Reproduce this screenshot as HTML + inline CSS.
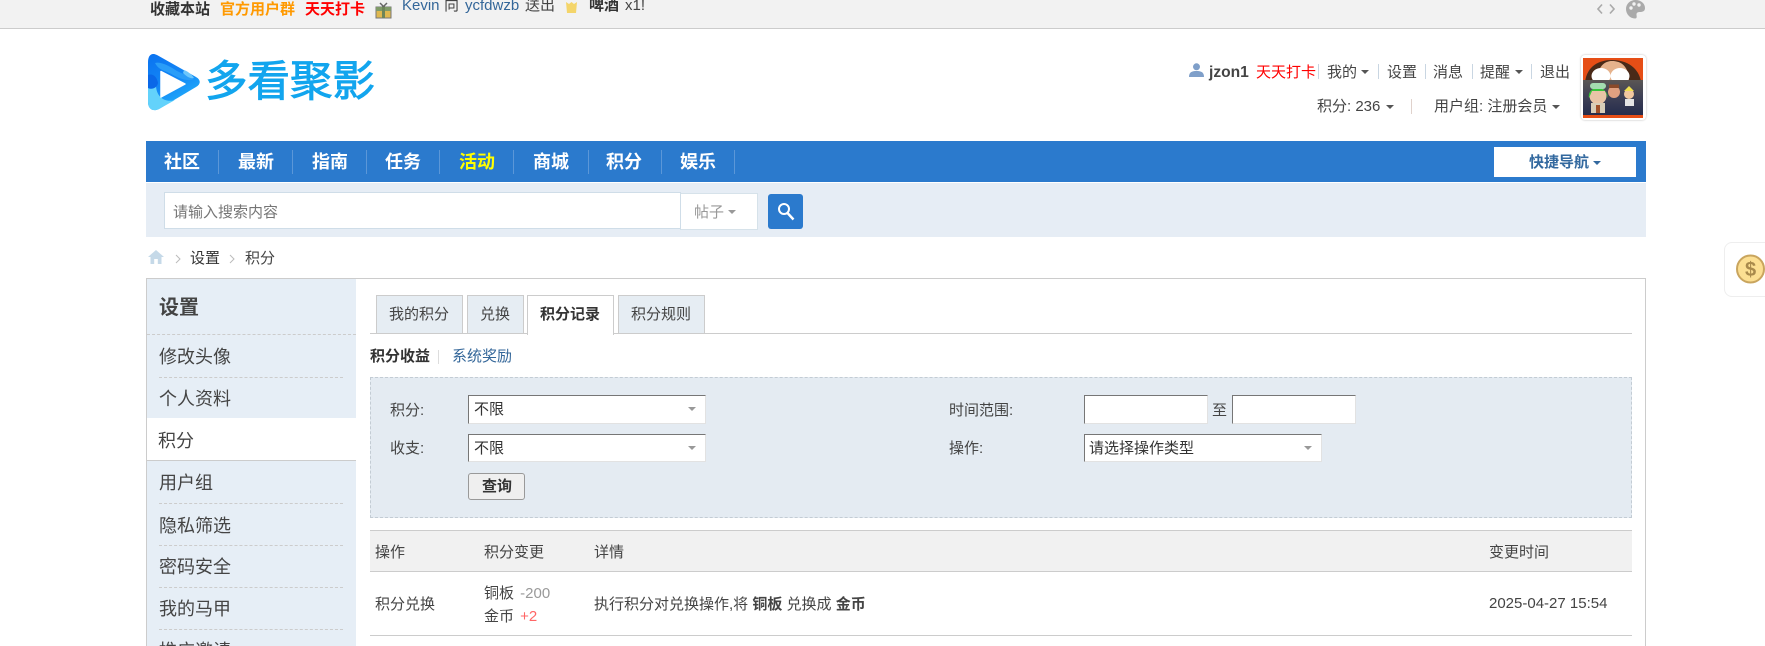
<!DOCTYPE html>
<html lang="zh-CN">
<head>
<meta charset="utf-8">
<title>积分记录</title>
<style>
html,body{margin:0;padding:0;background:#fff;width:1765px;height:646px;overflow:hidden;}
#w{position:relative;width:1765px;height:646px;overflow:hidden;font-family:"Liberation Sans","Noto Sans CJK SC",sans-serif;font-size:15px;color:#444;}
.a{position:absolute;box-sizing:border-box;}
.t{position:absolute;white-space:nowrap;line-height:20px;height:20px;}
.b{font-weight:bold;}
.nav{color:#fff;font-size:18px;font-weight:bold;line-height:24px;height:24px;top:150px;}
.ns{position:absolute;top:150px;height:24px;width:1px;background:#5b97d8;}
.sep{position:absolute;width:1px;background:#c9d6e2;}
.car{position:absolute;width:0;height:0;border-left:4px solid transparent;border-right:4px solid transparent;border-top:4px solid #555;}
.side{font-size:18px;line-height:24px;height:24px;left:159px;}
.dash{position:absolute;left:159px;width:184px;border-top:1px dashed #ccc;height:0;}
.tab{position:absolute;box-sizing:border-box;top:295px;height:39px;border:1px solid #ccc;background:#e6edf3;}
.sel{position:absolute;box-sizing:border-box;background:#fff;border:1px solid #e2e2e2;border-top-color:#767676;border-left-color:#767676;}
</style>
</head>
<body>
<div id="w">
<!-- top bar -->
<div class="a" style="left:0;top:0;width:1765px;height:29px;background:#f2f2f2;border-bottom:1px solid #ccc;"></div>
<div class="t b" style="left:150px;top:0;color:#333;">收藏本站</div>
<div class="t b" style="left:220px;top:0;color:#f90;">官方用户群</div>
<div class="t b" style="left:305px;top:0;color:#f00;">天天打卡</div>
<svg class="a" style="left:375px;top:2px;" width="17" height="17" viewBox="0 0 17 17"><rect x="1" y="5" width="15" height="11" fill="#dfb84f" stroke="#777"/><rect x="1" y="5" width="15" height="4" fill="#7f9a68"/><rect x="7" y="4" width="3" height="12" fill="#6d8558"/><path d="M5 1 L8.500 4.500 L12 1" fill="none" stroke="#666" stroke-width="1.500"/></svg>
<div class="t" style="left:402px;top:-4px;color:#369;">Kevin</div>
<div class="t" style="left:444px;top:-4px;">向</div>
<div class="t" style="left:465px;top:-4px;color:#369;">ycfdwzb</div>
<div class="t" style="left:525px;top:-4px;">送出</div>
<svg class="a" style="left:565px;top:2px;" width="13" height="11" viewBox="0 0 13 11"><path d="M1 0 L4 2 L6.500 0 L9 2 L12 0 L11 11 L2 11 Z" fill="#f4d56a"/></svg>
<div class="t b" style="left:589px;top:-4px;color:#333;">啤酒</div>
<div class="t" style="left:625px;top:-4px;">x1!</div>
<svg class="a" style="left:1597px;top:3px;" width="18" height="12" viewBox="0 0 18 12"><path d="M5 1.500 L1 6 L5 10.500 M13 1.500 L17 6 L13 10.500" fill="none" stroke="#aaa" stroke-width="1.600"/></svg>
<svg class="a" style="left:1626px;top:0;" width="19" height="19" viewBox="0 0 19 19"><path d="M9.500 0 C4 0 0 4 0 9 C0 14 4 18.500 9 18.500 C11.500 18.500 10.500 16 10.500 14.500 C10.500 12.500 12 12 14 12 C17 12 19 11 19 8 C19 3.500 15 0 9.500 0 Z" fill="#aaa"/><circle cx="5" cy="8" r="1.700" fill="#f2f2f2"/><circle cx="8" cy="4" r="1.700" fill="#f2f2f2"/><circle cx="13" cy="5" r="1.700" fill="#f2f2f2"/></svg>

<!-- logo -->
<svg class="a" style="left:147px;top:53px;" width="54" height="58" viewBox="0 0 54 58">
<defs><linearGradient id="g" x1="0" y1="0" x2="0.5" y2="1"><stop offset="0" stop-color="#0a72f0"/><stop offset="0.6" stop-color="#1489f6"/><stop offset="1" stop-color="#22b0fa"/></linearGradient></defs>
<path d="M10 2 C4 -1 1 3 1 9 L1 49 C1 56 6 59 12 56 L49 34 C54 31 54 27 49 24 Z" fill="url(#g)"/>
<path d="M1 32 L1 49 C1 56 6 59 12 56 L28 47 C18 50 9 44 9 32 Z" fill="#63d2fb"/>
<path d="M8 10 C14 8 24 14 30 18 C36 21 42 23 47 26 C40 29 32 25 26 22 C20 18 12 18 8 10 Z" fill="#2a9df8"/>
<path d="M1 22 C6 20 10 24 11 30 C10 35 5 37 1 35 Z" fill="#0a68e8"/>
<path d="M14 18.500 C14 18.500 38 31 38 31 L14 44 Z" fill="#fff" stroke="#fff" stroke-width="1.500" stroke-linejoin="round"/>
<path d="M37 17 C42 19 45 22 47 25 C43 26 39 23 36 20 Z" fill="#6cc6fb"/>
</svg>
<div class="t" style="left:205px;top:54px;height:58px;line-height:58px;font-size:42.5px;color:#12a5ee;-webkit-text-stroke:0.9px #12a5ee;">多看聚影</div>

<!-- user info -->
<svg class="a" style="left:1189px;top:63px;" width="15" height="14" viewBox="0 0 15 14"><circle cx="7.500" cy="3.800" r="3.500" fill="#7f9fc9"/><path d="M0 14 C0 9 3 8 7.500 8 C12 8 15 9 15 14 Z" fill="#7f9fc9"/></svg>
<div class="t b" style="left:1209px;top:63px;color:#444;font-size:15.6px;">jzon1</div>
<div class="t" style="left:1256px;top:63px;color:#f00;">天天打卡</div>
<div class="sep" style="left:1318px;top:64px;height:15px;"></div>
<div class="t" style="left:1327px;top:63px;">我的</div><div class="car" style="left:1361px;top:70px;"></div>
<div class="sep" style="left:1378px;top:64px;height:15px;"></div>
<div class="t" style="left:1387px;top:63px;">设置</div>
<div class="sep" style="left:1425px;top:64px;height:15px;"></div>
<div class="t" style="left:1433px;top:63px;">消息</div>
<div class="sep" style="left:1472px;top:64px;height:15px;"></div>
<div class="t" style="left:1480px;top:63px;">提醒</div><div class="car" style="left:1515px;top:70px;"></div>
<div class="sep" style="left:1531px;top:64px;height:15px;"></div>
<div class="t" style="left:1540px;top:63px;">退出</div>
<div class="t" style="left:1317px;top:97px;">积分: 236</div><div class="car" style="left:1386px;top:105px;"></div>
<div class="sep" style="left:1411px;top:99px;height:15px;background:#e0d2cc;"></div>
<div class="t" style="left:1434px;top:97px;">用户组: 注册会员</div><div class="car" style="left:1552px;top:105px;"></div>

<!-- avatar -->
<div class="a" style="left:1581px;top:55px;width:65px;height:65px;background:#fff;border-radius:4px;box-shadow:0 0 2px #bbb;"></div>
<svg class="a" style="left:1583px;top:58px;" width="60" height="60" viewBox="0 0 60 60">
<defs><linearGradient id="n" x1="0" y1="0" x2="0" y2="1"><stop offset="0" stop-color="#5a5654"/><stop offset="0.5" stop-color="#3d3f55"/><stop offset="1" stop-color="#252c4c"/></linearGradient></defs>
<rect width="60" height="60" fill="#e64e16"/>
<path d="M2 24 C4 8 16 2 29 2 C44 2 56 10 58 24 Z" fill="#4a2a18"/>
<path d="M14 24 C14 8 22 3 29 3 C38 3 46 8 46 24 Z" fill="#e6b28c"/>
<ellipse cx="18" cy="18" rx="9.500" ry="8" fill="#fff"/><ellipse cx="37" cy="18" rx="9.500" ry="8" fill="#fff"/>
<rect x="0" y="22" width="60" height="35" fill="url(#n)"/>
<rect x="0" y="57" width="60" height="3" fill="#e64e16"/>
<ellipse cx="15" cy="38" rx="8.500" ry="8.500" fill="#e8c4a6"/>
<path d="M6 40 C4 27 24 26 25 40 L22 33 L9 33 Z" fill="#37c43a"/>
<rect x="7" y="25" width="16" height="6" rx="3" fill="#a4dcb0"/>
<rect x="8" y="45" width="14" height="10" fill="#d8cdb8"/><rect x="13" y="47" width="4" height="8" fill="#a0502a"/>
<circle cx="31" cy="34" r="6" fill="#e0a080"/><rect x="26" y="26.500" width="10" height="3.500" fill="#8a4a2a"/>
<circle cx="46" cy="36" r="5" fill="#f2c8a0"/><path d="M41 33 L46 28 L51 33 Z" fill="#f0e050"/>
<rect x="42" y="41" width="9" height="7" fill="#e4e4e4"/>
</svg>

<!-- nav -->
<div class="a" style="left:146px;top:141px;width:1500px;height:41px;background:#2b7acd;"></div>
<div class="a" style="left:146px;top:183px;width:1500px;height:54px;background:#e6edf5;"></div>
<div class="t nav" style="left:164px;">社区</div><div class="ns" style="left:218px;"></div>
<div class="t nav" style="left:238px;">最新</div><div class="ns" style="left:292px;"></div>
<div class="t nav" style="left:312px;">指南</div><div class="ns" style="left:366px;"></div>
<div class="t nav" style="left:385px;">任务</div><div class="ns" style="left:439px;"></div>
<div class="t nav" style="left:459px;color:#ff0;">活动</div><div class="ns" style="left:513px;"></div>
<div class="t nav" style="left:533px;">商城</div><div class="ns" style="left:588px;"></div>
<div class="t nav" style="left:606px;">积分</div><div class="ns" style="left:661px;"></div>
<div class="t nav" style="left:680px;">娱乐</div><div class="ns" style="left:734px;"></div>
<div class="a" style="left:1494px;top:147px;width:142px;height:30px;background:#fff;"></div>
<div class="t b" style="left:1529px;top:153px;color:#33699f;">快捷导航</div>
<div class="car" style="left:1593px;top:161px;border-top-color:#33699f;"></div>

<!-- search -->
<div class="a" style="left:164px;top:192px;width:517px;height:37px;background:#fff;border:1px solid #cfdde8;"></div>
<div class="t" style="left:173px;top:203px;color:#757575;">请输入搜索内容</div>
<div class="a" style="left:680px;top:193px;width:78px;height:37px;background:#fff;border:1px solid #d6e2ea;border-left-color:#cfdde8;"></div>
<div class="t" style="left:694px;top:203px;color:#999;">帖子</div>
<div class="car" style="left:728px;top:210px;border-top-color:#999;"></div>
<div class="a" style="left:768px;top:194px;width:35px;height:35px;background:#2b7acd;border-radius:3px;"></div>
<svg class="a" style="left:777px;top:202px;" width="18" height="19" viewBox="0 0 18 19"><circle cx="7" cy="7" r="5" fill="none" stroke="#fff" stroke-width="2"/><path d="M10.500 11 L16.500 17.500" stroke="#fff" stroke-width="2.400"/></svg>

<!-- breadcrumb -->
<svg class="a" style="left:148px;top:250px;" width="16" height="14" viewBox="0 0 16 14"><path d="M8 0 L16 7 L13.500 7 L13.500 14 L9.800 14 L9.800 9 L6.200 9 L6.200 14 L2.500 14 L2.500 7 L0 7 Z" fill="#c5d9e8"/></svg>
<svg class="a" style="left:175px;top:254px;" width="6" height="10" viewBox="0 0 6 10"><path d="M1 1 L5 5 L1 9" fill="none" stroke="#bbb"/></svg>
<div class="t" style="left:190px;top:249px;color:#333;">设置</div>
<svg class="a" style="left:229px;top:254px;" width="6" height="10" viewBox="0 0 6 10"><path d="M1 1 L5 5 L1 9" fill="none" stroke="#bbb"/></svg>
<div class="t" style="left:245px;top:249px;">积分</div>

<!-- main frame -->
<div class="a" style="left:146px;top:278px;width:1500px;height:368px;border:1px solid #ccc;border-bottom:0;background:#fff;"></div>
<div class="a" style="left:147px;top:279px;width:209px;height:367px;background:#e6eef6;"></div>
<div class="t b" style="left:159px;top:296px;font-size:20px;line-height:24px;height:24px;color:#444;">设置</div>
<div class="a" style="left:147px;top:334px;width:209px;border-top:1px dashed #ccc;height:0;"></div>
<div class="t side" style="top:345px;">修改头像</div><div class="dash" style="top:377px;"></div>
<div class="t side" style="top:387px;">个人资料</div>
<div class="a" style="left:147px;top:418px;width:209px;height:43px;background:#fff;border-bottom:1px solid #ccc;"></div>
<div class="t side" style="top:429px;left:158px;">积分</div>
<div class="t side" style="top:471px;">用户组</div><div class="dash" style="top:503px;"></div>
<div class="t side" style="top:514px;">隐私筛选</div><div class="dash" style="top:545px;"></div>
<div class="t side" style="top:555px;">密码安全</div><div class="dash" style="top:587px;"></div>
<div class="t side" style="top:597px;">我的马甲</div><div class="dash" style="top:629px;"></div>
<div class="t side" style="top:639px;">推广邀请</div>

<!-- tabs -->
<div class="a" style="left:370px;top:333px;width:1262px;height:1px;background:#ccc;"></div>
<div class="tab" style="left:376px;width:87px;"></div><div class="t" style="left:389px;top:305px;">我的积分</div>
<div class="tab" style="left:467px;width:57px;"></div><div class="t" style="left:480px;top:305px;">兑换</div>
<div class="tab" style="left:527px;width:87px;height:40px;background:#fff;border-bottom:0;"></div><div class="t b" style="left:540px;top:305px;color:#333;">积分记录</div>
<div class="tab" style="left:618px;width:87px;"></div><div class="t" style="left:631px;top:305px;">积分规则</div>

<div class="t b" style="left:370px;top:347px;color:#333;">积分收益</div>
<div class="sep" style="left:438px;top:350px;height:14px;background:#ddd;"></div>
<div class="t" style="left:452px;top:347px;color:#369;">系统奖励</div>

<!-- filter -->
<div class="a" style="left:370px;top:377px;width:1262px;height:141px;background:#e4ebf2;border:1px dashed #c3ccd4;"></div>
<div class="t" style="left:390px;top:401px;">积分:</div>
<div class="t" style="left:390px;top:439px;">收支:</div>
<div class="sel" style="left:468px;top:395px;width:238px;height:29px;"></div>
<div class="t" style="left:474px;top:400px;color:#333;">不限</div><div class="car" style="left:688px;top:407px;border-top-color:#999;"></div>
<div class="sel" style="left:468px;top:434px;width:238px;height:28px;"></div>
<div class="t" style="left:474px;top:439px;color:#333;">不限</div><div class="car" style="left:688px;top:446px;border-top-color:#999;"></div>
<div class="a" style="left:468px;top:473px;width:57px;height:27px;background:#efefef;border:1px solid #999;border-radius:3px;"></div>
<div class="t b" style="left:482px;top:477px;color:#333;">查询</div>

<div class="t" style="left:949px;top:401px;">时间范围:</div>
<div class="t" style="left:949px;top:439px;">操作:</div>
<div class="sel" style="left:1084px;top:395px;width:124px;height:29px;"></div>
<div class="t" style="left:1212px;top:401px;">至</div>
<div class="sel" style="left:1232px;top:395px;width:124px;height:29px;"></div>
<div class="sel" style="left:1084px;top:434px;width:238px;height:28px;"></div>
<div class="t" style="left:1089px;top:439px;color:#333;">请选择操作类型</div><div class="car" style="left:1304px;top:446px;border-top-color:#999;"></div>

<!-- table -->
<div class="a" style="left:370px;top:530px;width:1262px;height:42px;background:#f1f1f1;border-top:1px solid #ccc;border-bottom:1px solid #ccc;"></div>
<div class="t" style="left:375px;top:543px;">操作</div>
<div class="t" style="left:484px;top:543px;">积分变更</div>
<div class="t" style="left:594px;top:543px;">详情</div>
<div class="t" style="left:1489px;top:543px;">变更时间</div>
<div class="t" style="left:375px;top:595px;">积分兑换</div>
<div class="t" style="left:484px;top:584px;">铜板 <span style="color:#999;margin-left:2px;">-200</span></div>
<div class="t" style="left:484px;top:607px;">金币 <span style="color:#f66;margin-left:2px;">+2</span></div>
<div class="t" style="left:594px;top:595px;">执行积分对兑换操作,将 <b>铜板</b> 兑换成 <b>金币</b></div>
<div class="t" style="left:1489px;top:594px;">2025-04-27 15:54</div>
<div class="a" style="left:370px;top:635px;width:1262px;height:1px;background:#ccc;"></div>

<!-- floating coin -->
<div class="a" style="left:1724px;top:242px;width:60px;height:55px;background:#fff;border:1px solid #eee;border-radius:8px;"></div>
<svg class="a" style="left:1736px;top:254px;" width="29" height="30" viewBox="0 0 29 30"><circle cx="14.500" cy="15" r="13.500" fill="#fcdf92" stroke="#c9a55e" stroke-width="2"/><text x="14.500" y="22" text-anchor="middle" font-family="Liberation Sans, sans-serif" font-size="20" font-weight="bold" fill="#a98a4c">$</text></svg>
</div>
</body>
</html>
